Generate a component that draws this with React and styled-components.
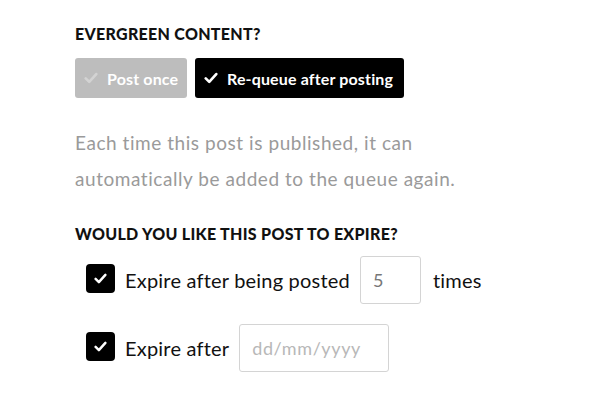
import React from 'react';
import styled, { createGlobalStyle } from 'styled-components';

const GlobalStyle = createGlobalStyle`
  body {
    margin: 0;
    background: #ffffff;
    font-family: "Lato", "DejaVu Sans", sans-serif;
  }
`;

const Page = styled.div`
  padding: 24px 0 0 75px;
  width: 600px;
  height: 400px;
  box-sizing: border-box;
`;

const Heading = styled.h3`
  margin: 0;
  font-size: 16px;
  font-weight: 900;
  letter-spacing: 0.3px;
  color: #111;
  line-height: 20px;
`;

const ButtonRow = styled.div`
  display: flex;
  gap: 8px;
  margin-top: 14px;
`;

const ChoiceButton = styled.button`
  display: flex;
  align-items: center;
  gap: 9px;
  height: 40px;
  width: ${(p) => p.$width}px;
  padding: 0 0 0 9px;
  border: none;
  border-radius: 3px;
  background: ${(p) => (p.$active ? '#000' : '#bdbdbd')};
  color: #fff;
  font-family: inherit;
  font-size: 16px;
  font-weight: 700;
  letter-spacing: 0.15px;
  cursor: pointer;
`;

const Tick = ({ color = '#fff', size = 14 }) => (
  <svg width={size} height={size} viewBox="0 0 16 16">
    <path d="M2 8.5 L6 12.5 L14 3.5" fill="none" stroke={color} strokeWidth="3" strokeLinecap="round" strokeLinejoin="round" />
  </svg>
);

const Note = styled.p`
  margin: 27px 0 0;
  font-size: 19px;
  letter-spacing: 0.55px;
  line-height: 36px;
  color: #9a9a9a;
`;

const Section = styled.div`
  margin-top: 27px;
`;

const OptionList = styled.div`
  display: flex;
  flex-direction: column;
  gap: 20px;
  margin-top: 12px;
  padding-left: 11px;
`;

const Option = styled.label`
  display: flex;
  align-items: center;
  gap: 10px;
  font-size: 20px;
  letter-spacing: 0.2px;
  color: #111;
`;

const Box = styled.span`
  display: inline-flex;
  align-items: center;
  justify-content: center;
  width: 29px;
  height: 29px;
  margin-top: -3px;
  border-radius: 4px;
  background: #000;
  flex-shrink: 0;
`;

const Field = styled.input`
  box-sizing: border-box;
  width: ${(p) => p.$width}px;
  height: 48px;
  border: 1px solid #d4d4d4;
  border-radius: 3px;
  padding: 0 12px;
  font-family: inherit;
  font-size: 18px;
  letter-spacing: 0.6px;
  color: #777;
  outline: none;
  &::placeholder {
    color: #b8b8b8;
  }
`;

const Suffix = styled.span`
  margin-left: 2px;
`;

export default function App() {
  return (
    <>
      <GlobalStyle />
      <Page>
        <Heading>EVERGREEN CONTENT?</Heading>
        <ButtonRow>
          <ChoiceButton $width={112}>
            <Tick color="#d3d3d3" />
            Post once
          </ChoiceButton>
          <ChoiceButton $active $width={209}>
            <Tick />
            Re-queue after posting
          </ChoiceButton>
        </ButtonRow>
        <Note>
          Each time this post is published, it can
          <br />
          automatically be added to the queue again.
        </Note>
        <Section>
          <Heading>WOULD YOU LIKE THIS POST TO EXPIRE?</Heading>
          <OptionList>
            <Option>
              <Box>
                <Tick size={13} />
              </Box>
              Expire after being posted
              <Field $width={61} defaultValue="5" />
              <Suffix>times</Suffix>
            </Option>
            <Option>
              <Box>
                <Tick size={13} />
              </Box>
              Expire after
              <Field $width={150} placeholder="dd/mm/yyyy" />
            </Option>
          </OptionList>
        </Section>
      </Page>
    </>
  );
}
